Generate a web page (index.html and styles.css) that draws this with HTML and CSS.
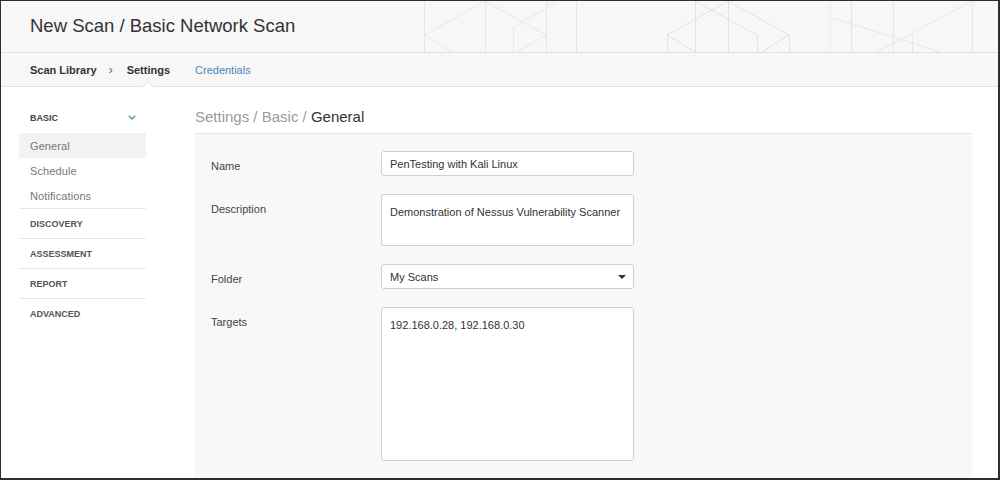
FILE: index.html
```html
<!DOCTYPE html>
<html lang="en">
<head>
<meta charset="utf-8">
<title>New Scan / Basic Network Scan</title>
<link rel="stylesheet" href="styles.css">
</head>
<body>
<div class="frame">
  <header class="topbar">
    <svg class="pattern" width="997" height="51" viewBox="1 1 997 51" aria-hidden="true">
      <g stroke="#e6e6e6" stroke-width="1" fill="none">
        <line x1="424.5" y1="1" x2="424.5" y2="52"/>
        <line x1="485" y1="1" x2="425" y2="35"/>
        <line x1="425" y1="35" x2="452" y2="52"/>
        <line x1="485.5" y1="1" x2="485.5" y2="52"/>
        <line x1="485" y1="1" x2="546" y2="35"/>
        <line x1="546" y1="35" x2="517" y2="52"/>
        <line x1="513.5" y1="28" x2="513.5" y2="52"/>
        <line x1="513" y1="28" x2="557" y2="1"/>
        <line x1="546.5" y1="1" x2="546.5" y2="52"/>
        <line x1="576.5" y1="1" x2="576.5" y2="52"/>
        <line x1="830.5" y1="1" x2="830.5" y2="52" stroke="#eeeeee"/>
        <line x1="851.5" y1="1" x2="851.5" y2="52"/>
        <line x1="893.5" y1="1" x2="893.5" y2="52"/>
        <line x1="912.5" y1="35" x2="912.5" y2="52"/>
        <line x1="972.5" y1="1" x2="972.5" y2="52"/>
        <line x1="833" y1="18" x2="940" y2="52"/>
        <line x1="877" y1="52" x2="972" y2="1"/>
      </g>
      <g stroke="#d9eAd2" stroke-width="1" fill="none">
        <line x1="667.5" y1="35" x2="667.5" y2="52"/>
        <line x1="695.5" y1="1" x2="695.5" y2="52"/>
        <line x1="728.5" y1="1" x2="728.5" y2="52"/>
        <line x1="757.5" y1="35" x2="757.5" y2="52"/>
        <line x1="789.5" y1="35" x2="789.5" y2="52"/>
        <line x1="667" y1="35" x2="728" y2="1"/>
        <line x1="695" y1="1" x2="757" y2="35"/>
        <line x1="728" y1="1" x2="789" y2="35"/>
        <line x1="667" y1="35" x2="695" y2="52"/>
        <line x1="789" y1="35" x2="762" y2="52"/>
      </g>
    </svg>
    <h1 class="title">New Scan / Basic Network Scan</h1>
  </header>

  <nav class="subnav">
    <span class="sub-item strong">Scan Library</span>
    <span class="sub-item sub-sep">&#8250;</span>
    <span class="sub-item strong current">Settings</span>
    <span class="sub-item link">Credentials</span>
  </nav>

  <div class="body">
    <aside class="sidebar">
      <div class="nav-head">
        <span>BASIC</span>
        <svg class="chev" width="8" height="5" viewBox="0 0 8 5" aria-hidden="true">
          <polyline points="0.8,0.8 4,4 7.2,0.8" fill="none" stroke="#5aa55a" stroke-width="1.4"/>
        </svg>
      </div>
      <ul class="nav-list">
        <li class="nav-item active">General</li>
        <li class="nav-item">Schedule</li>
        <li class="nav-item">Notifications</li>
      </ul>
      <div class="nav-section">DISCOVERY</div>
      <div class="nav-section">ASSESSMENT</div>
      <div class="nav-section">REPORT</div>
      <div class="nav-section">ADVANCED</div>
    </aside>

    <main class="main">
      <div class="crumb"><span class="crumb-dim">Settings / Basic / </span><span class="crumb-cur">General</span></div>
      <div class="panel">
        <div class="row">
          <div class="label">Name</div>
          <div class="field input">PenTesting with Kali Linux</div>
        </div>
        <div class="row">
          <div class="label">Description</div>
          <div class="field area area-sm">Demonstration of Nessus Vulnerability Scanner</div>
        </div>
        <div class="row">
          <div class="label">Folder</div>
          <div class="field input select">
            <span>My Scans</span>
            <svg class="caret" width="8" height="4" viewBox="0 0 8 4" aria-hidden="true"><polygon points="0,0 8,0 4,4" fill="#333"/></svg>
          </div>
        </div>
        <div class="row">
          <div class="label">Targets</div>
          <div class="field area area-lg">192.168.0.28, 192.168.0.30</div>
        </div>
      </div>
    </main>
  </div>
</div>
</body>
</html>
```

FILE: styles.css
```css
* { box-sizing: border-box; }

html, body {
  margin: 0;
  padding: 0;
  background: #ffffff;
}

body {
  font-family: "Liberation Sans", Arial, sans-serif;
  color: #333;
}

.frame {
  width: 1000px;
  height: 480px;
  border: 1px solid #2b2f34;
  border-right-width: 2px;
  border-bottom-width: 2px;
  overflow: hidden;
  background: #fff;
  display: flex;
  flex-direction: column;
}

/* header */
.topbar {
  position: relative;
  height: 52px;
  flex: none;
  background: #f7f7f7;
  border-bottom: 1px solid #e2e2e2;
  display: flex;
  align-items: center;
  padding-left: 29px;
}

.pattern {
  position: absolute;
  left: 0;
  top: 0;
}

.title {
  position: relative;
  margin: 0;
  font-size: 18.5px;
  font-weight: normal;
  color: #333;
  padding-bottom: 1px;
}

/* sub navigation */
.subnav {
  height: 34px;
  flex: none;
  background: #f7f7f7;
  border-bottom: 1px solid #e2e2e2;
  display: flex;
  align-items: stretch;
  padding-left: 29px;
  font-size: 11px;
}

.sub-item {
  display: flex;
  align-items: center;
  padding-top: 1px;
}

.sub-item.strong {
  font-weight: bold;
  color: #333;
}

.sub-sep {
  color: #666;
  margin: 0 14px 0 12px;
  font-size: 12px;
}

.current {
  position: relative;
}

.current::before,
.current::after {
  content: "";
  position: absolute;
  left: 50%;
  width: 0;
  height: 0;
  border-style: solid;
}

.current::before {
  bottom: -1px;
  margin-left: -6px;
  border-width: 0 6px 6px 6px;
  border-color: transparent transparent #dcdcdc transparent;
}

.current::after {
  bottom: -1px;
  margin-left: -5px;
  border-width: 0 5px 5px 5px;
  border-color: transparent transparent #ffffff transparent;
}

.sub-item.link {
  color: #4a86b8;
  margin-left: 25px;
}

/* body */
.body {
  flex: 1;
  display: flex;
  min-height: 0;
}

.sidebar {
  width: 127px;
  margin-left: 18px;
  padding-top: 18px;
  flex: none;
}

.nav-head {
  height: 26px;
  display: flex;
  align-items: center;
  justify-content: space-between;
  padding: 0 10px 0 11px;
  font-size: 9px;
  font-weight: bold;
  color: #444;
}

.chev {
  display: block;
  margin-top: -1px;
}

.nav-list {
  list-style: none;
  margin: 2px 0 0;
  padding: 0;
}

.nav-item {
  height: 25px;
  line-height: 25px;
  padding-top: 1px;
  padding-left: 11px;
  font-size: 11px;
  color: #777;
  letter-spacing: 0.1px;
}

.nav-item.active {
  background: #f2f2f2;
}

.nav-section {
  border-top: 1px solid #e6e6e6;
  height: 30px;
  display: flex;
  align-items: center;
  padding-left: 11px;
  font-size: 9px;
  font-weight: bold;
  color: #555;
}

/* main */
.main {
  margin-left: 49px;
  width: 777px;
  flex: none;
  display: flex;
  flex-direction: column;
}

.crumb {
  padding: 20px 0 6px;
  line-height: 20px;
  font-size: 15px;
  border-bottom: 1px solid #e5e5e5;
  flex: none;
}

.crumb-dim {
  color: #9a9a9a;
}

.crumb-cur {
  color: #333;
}

.panel {
  flex: 1;
  background: #f8f8f8;
  padding: 17px 16px 0;
}

.row {
  display: flex;
  margin-bottom: 18px;
}

.label {
  width: 170px;
  flex: none;
  padding-top: 9px;
  font-size: 11px;
  line-height: 13px;
  color: #444;
}

.field {
  width: 253px;
  border: 1px solid #cfcfcf;
  border-radius: 3px;
  background: #fff;
  padding: 0 8px;
  font-size: 11px;
  color: #333;
}

.input {
  height: 25px;
  display: flex;
  align-items: center;
}

.area {
  padding-top: 10px;
  line-height: 14px;
}

.area-sm {
  height: 52px;
}

.area-lg {
  height: 154px;
}

.select {
  justify-content: space-between;
  padding-right: 7px;
}

.caret {
  display: block;
}
```
